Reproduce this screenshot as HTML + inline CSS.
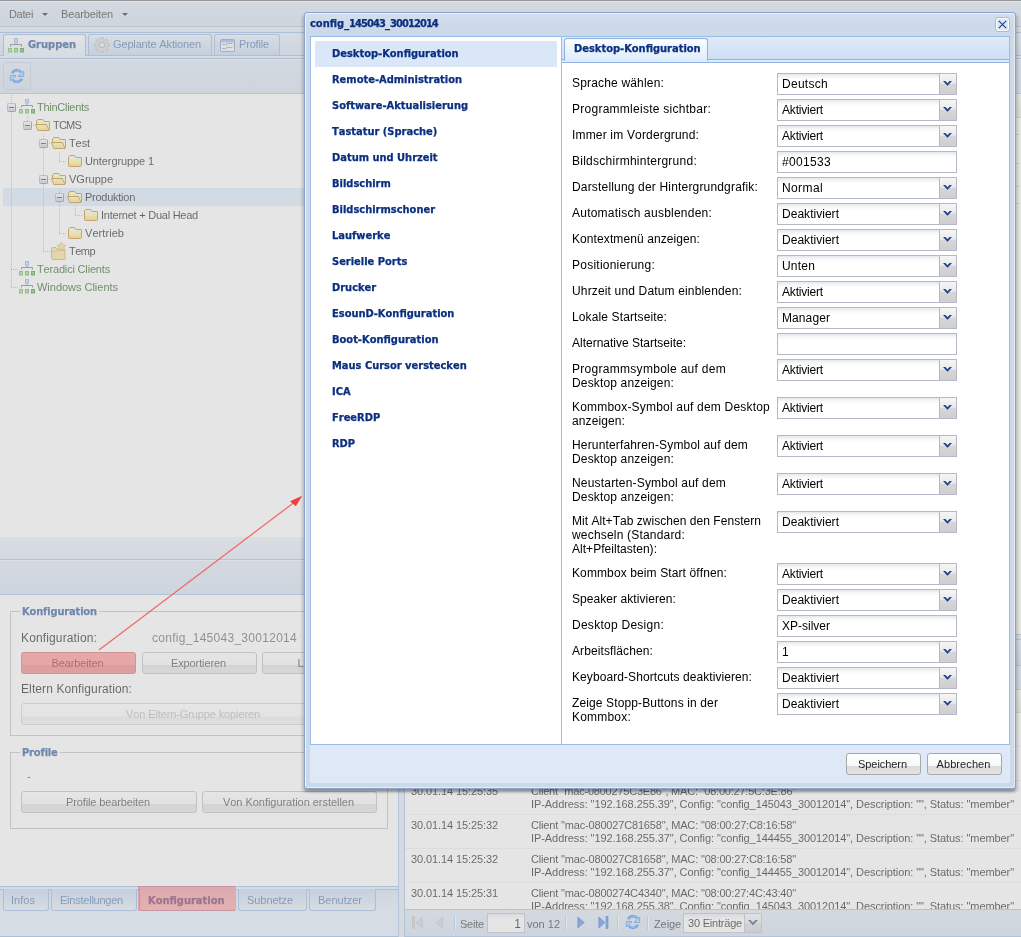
<!DOCTYPE html><html lang="de"><head><meta charset="utf-8"><title>TCMS</title><style>
*{box-sizing:border-box;margin:0;padding:0}
html,body{width:1021px;height:937px;overflow:hidden;background:#fff}
body{font:11px "Liberation Sans",sans-serif;color:#000;position:relative;font-kerning:none}
.abs{position:absolute}
.bd{font-family:"DejaVu Sans Condensed","DejaVu Sans",sans-serif;font-weight:bold;font-size:11px;-webkit-text-stroke:.25px currentColor}
#wrap{position:absolute;left:0;top:0;width:1021px;height:937px;overflow:hidden;will-change:transform}
#app{position:absolute;left:0;top:0;width:1021px;height:937px;background:#dfe8f6;overflow:hidden}
#mask{position:absolute;left:0;top:1px;width:1021px;height:936px;background:rgba(204,204,204,.5)}
#topline{position:absolute;left:0;top:0;width:1021px;height:1px;background:#979797}
.tb{position:absolute;background:linear-gradient(#dbe6f4,#d6e2f2 50%,#d2deef);border-bottom:1px solid #a9bfd3}
.menu{position:absolute;top:0;height:25px;line-height:25px;font-size:11px;color:#222;white-space:nowrap}
.arr{position:absolute;width:0;height:0;border-left:3px solid transparent;border-right:3px solid transparent;border-top:3px solid #111}
.strip{position:absolute;background:#deecfd;border:1px solid #8db2e3}
.tab{position:absolute;border:1px solid #8db2e3;border-bottom:none;border-radius:3px 3px 0 0;background:linear-gradient(#e6effb,#cfdff4 50%,#c1d5ee);color:#416aa3;font-size:11px;white-space:nowrap;box-shadow:inset 0 1px 0 #f2f7fd}
.tab.act{background:linear-gradient(#fff,#eef5fe 40%,#deecfd);color:#15428b}
.tab span.t{position:absolute;top:0;line-height:19px}
.btab{position:absolute;border:1px solid #8db2e3;border-top:none;border-radius:0 0 3px 3px;background:linear-gradient(#c1d5ee,#cfdff4 50%,#e6effb);color:#416aa3;font-size:11px;white-space:nowrap}
.btab span{position:absolute;top:0;line-height:23px}
.trow{position:absolute;left:3px;width:395px;height:18px;font-size:11px;white-space:nowrap}
.trow.sel{background:#d9e8fb}
.trow .tx{position:absolute;top:0;line-height:18px}
.green{color:#115000}
.vl{position:absolute;width:1px;background:repeating-linear-gradient(#b0b0b0 0 1px,transparent 1px 2px)}
.hl{position:absolute;height:1px;background:repeating-linear-gradient(90deg,#b0b0b0 0 1px,transparent 1px 2px)}
.pm{position:absolute;width:9px;height:9px;border:1px solid #8494b0;border-color:#a3b0c6 #6f80a0 #6f80a0 #a3b0c6;border-radius:2px;background:linear-gradient(#fdfdfe,#d4dce8 60%,#b9c5d8)}
.pm:after{content:"";position:absolute;left:1px;top:3px;width:5px;height:1px;background:#333}
.btn{position:absolute;height:22px;border:1px solid #b8b8b8;border-radius:3px;background:linear-gradient(#fff,#f7f7f7 60%,#dcdcdc 62%,#e2e2e2);color:#333;font-size:11px;line-height:20px;text-align:center;padding-right:2px;white-space:nowrap;overflow:hidden}
.btn.dis{color:#b0b0b0;border-color:#cfcfcf;background:linear-gradient(#fff,#fafafa 62%,#ececec 64%,#f0f0f0)}
.fs{position:absolute;border:1px solid #b5b8c8}
.legend{position:absolute;background:#fff;color:#15428b;padding:0 2px;white-space:nowrap;line-height:14px;letter-spacing:-.15px}
.lbl{position:absolute;white-space:nowrap;color:#000;line-height:14px}
.grow{position:absolute;left:405px;width:616px;height:34px;border-top:1px solid #fff;border-bottom:1px solid #ededed;font-size:11px;color:#000;white-space:nowrap;overflow:hidden}
.grow span.c{position:absolute;line-height:13px}
.sep{position:absolute;width:2px;height:14px;border-left:1px solid #98c8ff;border-right:1px solid #fff}
#win{position:absolute;left:304px;top:12px;width:712px;height:777px;background:#ccd9e8;border:1px solid #8aa4c9;border-radius:3px;box-shadow:inset 1px 1px 0 #f0f4fa,inset -1px -1px 0 #e6edf6,0 3px 2px 0 rgba(0,0,0,.13),-2px 3px 3px 0 rgba(0,0,0,.15),2px 3px 3px 0 rgba(0,0,0,.15)}
.wtitle{position:absolute;left:5px;top:4px;color:#0b2f80;white-space:nowrap;line-height:14px}
.li{position:absolute;width:242px;height:26px;padding-left:17px;color:#0b2f80;line-height:26px;white-space:nowrap}
.li.sel{background:#dae7f9}
.frow{position:absolute;left:10px;width:430px}
.flabel{position:absolute;left:0;width:205px;font-size:12px;line-height:14px;padding:3px 3px 3px 0;white-space:nowrap}
.fld{position:absolute;left:205px;width:180px;height:22px;border:1px solid #b5b8c8;background:linear-gradient(#e4e8ec,#f6f7f9 3px,#fff 6px);font-size:12px;line-height:20px;padding-left:4px;white-space:nowrap;overflow:hidden}
.trg{position:absolute;right:0;top:0;width:17px;height:20px;border-left:1px solid #b5b8c8;background:linear-gradient(#f6f6f6,#eaeaea 46%,#d6d6d6 50%,#cfcfcf)}
.trg svg{position:absolute;left:3px;top:7px}
</style></head><body>
<div id="wrap"><div id="app">
<div class="tb" style="left:0;top:1px;width:1021px;height:26px;border-top:1px solid #f6fafe">
<span class="menu" style="left:9px"><span style="letter-spacing:-0.336px">Datei</span></span><i class="arr" style="left:42px;top:11px"></i>
<span class="menu" style="left:61px"><span style="letter-spacing:-0.121px">Bearbeiten</span></span><i class="arr" style="left:122px;top:11px"></i>
</div>
<div class="strip" style="left:-1px;top:32px;width:400px;height:27px"></div>
<div class="abs" style="left:0;top:33px;width:398px;height:22px;background:linear-gradient(#e3edfb,#cedff5)"></div>
<div class="abs" style="left:0;top:55px;width:398px;height:1px;background:#8db2e3"></div>
<div class="tab act bd" style="left:3px;top:34px;width:83px;height:22px"><svg class="abs" style="left:4px;top:3px" width="16" height="15" viewBox="0 0 16 15"><rect x="6" y="0" width="4" height="4.500" fill="#74aef6"/><rect x="7" y="1" width="2" height="2.500" fill="#c8d6fa"/><path d="M8 4.500v2M2.500 8.500V6.500h11v2" stroke="#6c6c6c" fill="none"/><rect x="0" y="10" width="4" height="4.500" fill="#55b640"/><rect x="1" y="11" width="2" height="2.500" fill="#a4de90"/><rect x="6" y="10" width="4" height="4.500" fill="#4fb03a"/><rect x="7" y="11" width="2" height="2.500" fill="#98d884"/><rect x="12" y="10" width="4" height="4.500" fill="#2a8c1c"/><rect x="13" y="11" width="2" height="2.500" fill="#68be54"/></svg><span class="t" style="left:24px">Gruppen</span></div>
<div class="tab" style="left:88px;top:34px;width:124px;height:21px"><svg class="abs" style="left:5px;top:2px" width="16" height="16" viewBox="0 0 16 16"><g fill="#cfcfcf" stroke="#a8a8a8" stroke-width=".6"><rect x="6.500" y=".3" width="3" height="4" rx=".6" transform="rotate(0 8 8)"/><rect x="6.500" y=".3" width="3" height="4" rx=".6" transform="rotate(45 8 8)"/><rect x="6.500" y=".3" width="3" height="4" rx=".6" transform="rotate(90 8 8)"/><rect x="6.500" y=".3" width="3" height="4" rx=".6" transform="rotate(135 8 8)"/><rect x="6.500" y=".3" width="3" height="4" rx=".6" transform="rotate(180 8 8)"/><rect x="6.500" y=".3" width="3" height="4" rx=".6" transform="rotate(225 8 8)"/><rect x="6.500" y=".3" width="3" height="4" rx=".6" transform="rotate(270 8 8)"/><rect x="6.500" y=".3" width="3" height="4" rx=".6" transform="rotate(315 8 8)"/></g><circle cx="8" cy="8" r="5.200" fill="#d6d6d6"/><circle cx="8" cy="8" r="2.900" fill="none" stroke="#a4a4a4" stroke-width="1"/><circle cx="8" cy="8" r="2" fill="#e6edf7"/></svg><span class="t" style="left:24px"><span style="letter-spacing:-0.148px">Geplante Aktionen</span></span></div>
<div class="tab" style="left:214px;top:34px;width:66px;height:21px"><svg class="abs" style="left:5px;top:4px" width="15" height="13" viewBox="0 0 15 13"><rect x=".5" y=".5" width="14" height="12" rx="1" fill="#f4f4f2" stroke="#6c8fce"/><rect x="1" y="1" width="13" height="2.400" fill="#8db0e6"/><path d="M2.500 5.500h2.500M2.500 9.500h2.500" stroke="#5b7fd0" stroke-width="1.200"/><path d="M6.500 6.500V4.500h6M6.500 10.500V8.500h6" stroke="#a0a0a0" fill="none"/></svg><span class="t" style="left:24px"><span style="letter-spacing:-0.168px">Profile</span></span></div>
<div class="tb" style="left:0;top:59px;width:398px;height:35px;border-top:1px solid #eef3fa"></div>
<div class="abs" style="left:3px;top:62px;width:28px;height:28px;border:1px solid #bfcbdb;border-radius:3px;background:linear-gradient(#dde7f4,#d0dcee)"><svg class="abs" style="left:5px;top:5px" width="16" height="16" viewBox="0 0 16 16"><path d="M3.200 5.200A5.300 5.300 0 0 1 12.200 4.300" stroke="#1478ee" stroke-width="2.600" fill="none"/><path d="M3.600 4.900A5 5 0 0 1 11.800 4.300" stroke="#78beff" stroke-width=".9" fill="none"/><path d="M14.700 3.200V8.400H9z" fill="#a4dcff" stroke="#2a80e6" stroke-width=".9"/><path d="M12.800 10.800A5.300 5.300 0 0 1 3.800 11.700" stroke="#1478ee" stroke-width="2.600" fill="none"/><path d="M12.400 11.100A5 5 0 0 1 4.200 11.700" stroke="#78beff" stroke-width=".9" fill="none"/><path d="M1.300 12.800V7.600H7z" fill="#a4dcff" stroke="#2a80e6" stroke-width=".9"/></svg></div>
<div class="abs" style="left:0;top:94px;width:398px;height:443px;background:#fff"></div>
<div class="trow" style="top:98px">
<i class="hl" style="left:14px;top:9px;width:2px"></i><i class="pm" style="left:4px;top:5px"></i>
<svg class="abs" style="left:16px;top:1px" width="16" height="15" viewBox="0 0 16 15"><rect x="6" y="0" width="4" height="4.500" fill="#74aef6"/><rect x="7" y="1" width="2" height="2.500" fill="#c8d6fa"/><path d="M8 4.500v2M2.500 8.500V6.500h11v2" stroke="#6c6c6c" fill="none"/><rect x="0" y="10" width="4" height="4.500" fill="#55b640"/><rect x="1" y="11" width="2" height="2.500" fill="#a4de90"/><rect x="6" y="10" width="4" height="4.500" fill="#4fb03a"/><rect x="7" y="11" width="2" height="2.500" fill="#98d884"/><rect x="12" y="10" width="4" height="4.500" fill="#2a8c1c"/><rect x="13" y="11" width="2" height="2.500" fill="#68be54"/></svg>
<span class="tx green" style="left:34px"><span style="letter-spacing:-0.275px">ThinClients</span></span></div>
<div class="trow" style="top:116px">
<i class="hl" style="left:30px;top:9px;width:2px"></i><i class="pm" style="left:20px;top:5px"></i>
<svg class="abs" style="left:32px;top:2px" width="16" height="14" viewBox="0 0 16 14"><path d="M1.500 7V2.800L3 1.500h4.800L9.200 3.500H14q.5 0 .5.500V11.500L13.500 12.500" fill="#fffc9a" stroke="#b87c10"/><path d="M3 3h4.500" stroke="#fff" stroke-width="1"/><path d="M10 4.500h4" stroke="#fff" stroke-width="1"/><path d="M.5 6.500H11.300L14 12.500H2.800z" fill="#fff796" stroke="#b87c10"/><path d="M2 9.500H12.600L13.600 12H3z" fill="#ffc45a" opacity=".45"/></svg>
<span class="tx" style="left:50px"><span style="letter-spacing:-0.791px">TCMS</span></span></div>
<div class="trow" style="top:134px">
<i class="hl" style="left:46px;top:9px;width:2px"></i><i class="pm" style="left:36px;top:5px"></i>
<svg class="abs" style="left:48px;top:2px" width="16" height="14" viewBox="0 0 16 14"><path d="M1.500 7V2.800L3 1.500h4.800L9.200 3.500H14q.5 0 .5.500V11.500L13.500 12.500" fill="#fffc9a" stroke="#b87c10"/><path d="M3 3h4.500" stroke="#fff" stroke-width="1"/><path d="M10 4.500h4" stroke="#fff" stroke-width="1"/><path d="M.5 6.500H11.300L14 12.500H2.800z" fill="#fff796" stroke="#b87c10"/><path d="M2 9.500H12.600L13.600 12H3z" fill="#ffc45a" opacity=".45"/></svg>
<span class="tx" style="left:66px"><span style="letter-spacing:-0.098px">Test</span></span></div>
<div class="trow" style="top:152px">
<i class="hl" style="left:56px;top:9px;width:8px"></i>
<svg class="abs" style="left:64px;top:2px" width="16" height="14" viewBox="0 0 16 14"><path d="M1.500 11.500V2.800L2.800 1.500H7.800L9 3.500H14q.5 0 .5.500V11.500q0 1-1 1H2.500q-1 0-1-1z" fill="#fffa96" stroke="#b87c10"/><path d="M3 2.800h4.500M2.300 4.600H13.700" stroke="#fff" stroke-width="1"/><path d="M2 8H14V11.500q0 .5-.5.500H2.500q-.5 0-.5-.5z" fill="#ffc45a" opacity=".28"/><path d="M2 10H14V11.500q0 .5-.5.500H2.500q-.5 0-.5-.5z" fill="#ffb84a" opacity=".35"/></svg>
<span class="tx" style="left:82px"><span style="letter-spacing:-0.102px">Untergruppe 1</span></span></div>
<div class="trow" style="top:170px">
<i class="hl" style="left:46px;top:9px;width:2px"></i><i class="pm" style="left:36px;top:5px"></i>
<svg class="abs" style="left:48px;top:2px" width="16" height="14" viewBox="0 0 16 14"><path d="M1.500 7V2.800L3 1.500h4.800L9.200 3.500H14q.5 0 .5.500V11.500L13.500 12.500" fill="#fffc9a" stroke="#b87c10"/><path d="M3 3h4.500" stroke="#fff" stroke-width="1"/><path d="M10 4.500h4" stroke="#fff" stroke-width="1"/><path d="M.5 6.500H11.300L14 12.500H2.800z" fill="#fff796" stroke="#b87c10"/><path d="M2 9.500H12.600L13.600 12H3z" fill="#ffc45a" opacity=".45"/></svg>
<span class="tx" style="left:66px"><span style="letter-spacing:-0.004px">VGruppe</span></span></div>
<div class="trow sel" style="top:188px">
<i class="hl" style="left:62px;top:9px;width:2px"></i><i class="pm" style="left:52px;top:5px"></i>
<svg class="abs" style="left:64px;top:2px" width="16" height="14" viewBox="0 0 16 14"><path d="M1.500 7V2.800L3 1.500h4.800L9.200 3.500H14q.5 0 .5.500V11.500L13.500 12.500" fill="#fffc9a" stroke="#b87c10"/><path d="M3 3h4.500" stroke="#fff" stroke-width="1"/><path d="M10 4.500h4" stroke="#fff" stroke-width="1"/><path d="M.5 6.500H11.300L14 12.500H2.800z" fill="#fff796" stroke="#b87c10"/><path d="M2 9.500H12.600L13.600 12H3z" fill="#ffc45a" opacity=".45"/></svg>
<span class="tx" style="left:82px"><span style="letter-spacing:-0.259px">Produktion</span></span></div>
<div class="trow" style="top:206px">
<i class="hl" style="left:72px;top:9px;width:8px"></i>
<svg class="abs" style="left:80px;top:2px" width="16" height="14" viewBox="0 0 16 14"><path d="M1.500 11.500V2.800L2.800 1.500H7.800L9 3.500H14q.5 0 .5.500V11.500q0 1-1 1H2.500q-1 0-1-1z" fill="#fffa96" stroke="#b87c10"/><path d="M3 2.800h4.500M2.300 4.600H13.700" stroke="#fff" stroke-width="1"/><path d="M2 8H14V11.500q0 .5-.5.500H2.500q-.5 0-.5-.5z" fill="#ffc45a" opacity=".28"/><path d="M2 10H14V11.500q0 .5-.5.500H2.500q-.5 0-.5-.5z" fill="#ffb84a" opacity=".35"/></svg>
<span class="tx" style="left:98px"><span style="letter-spacing:-0.241px">Internet + Dual Head</span></span></div>
<div class="trow" style="top:224px">
<i class="hl" style="left:56px;top:9px;width:8px"></i>
<svg class="abs" style="left:64px;top:2px" width="16" height="14" viewBox="0 0 16 14"><path d="M1.500 11.500V2.800L2.800 1.500H7.800L9 3.500H14q.5 0 .5.500V11.500q0 1-1 1H2.500q-1 0-1-1z" fill="#fffa96" stroke="#b87c10"/><path d="M3 2.800h4.500M2.300 4.600H13.700" stroke="#fff" stroke-width="1"/><path d="M2 8H14V11.500q0 .5-.5.500H2.500q-.5 0-.5-.5z" fill="#ffc45a" opacity=".28"/><path d="M2 10H14V11.500q0 .5-.5.500H2.500q-.5 0-.5-.5z" fill="#ffb84a" opacity=".35"/></svg>
<span class="tx" style="left:82px"><span style="letter-spacing:0.060px">Vertrieb</span></span></div>
<div class="trow" style="top:242px">
<i class="hl" style="left:40px;top:9px;width:8px"></i>
<svg class="abs" style="left:48px;top:-1px" width="18" height="20" viewBox="0 0 18 20"><path d="M.5 17.500V7.500q0-1 1-1h3.500l1 1.500h7q1 0 1 1v8.500q0 1-1 1h-11.500q-1 0-1-1z" fill="#fbe08a" stroke="#d9a04a"/><path d="M1.200 10.500h4l1-1h7.300" fill="none" stroke="#e4b05c" stroke-width=".8"/><path d="M10.500 1l1.400 2.900 3.100.4-2.300 2.100.6 3.100-2.800-1.500-2.800 1.500.6-3.100L6 4.300l3.100-.4z" fill="#f9e39a" stroke="#d6a850" stroke-width=".8"/></svg>
<span class="tx" style="left:66px"><span style="letter-spacing:-0.529px">Temp</span></span></div>
<div class="trow" style="top:260px">
<i class="hl" style="left:8px;top:9px;width:8px"></i>
<svg class="abs" style="left:16px;top:1px" width="16" height="15" viewBox="0 0 16 15"><rect x="6" y="0" width="4" height="4.500" fill="#74aef6"/><rect x="7" y="1" width="2" height="2.500" fill="#c8d6fa"/><path d="M8 4.500v2M2.500 8.500V6.500h11v2" stroke="#6c6c6c" fill="none"/><rect x="0" y="10" width="4" height="4.500" fill="#55b640"/><rect x="1" y="11" width="2" height="2.500" fill="#a4de90"/><rect x="6" y="10" width="4" height="4.500" fill="#4fb03a"/><rect x="7" y="11" width="2" height="2.500" fill="#98d884"/><rect x="12" y="10" width="4" height="4.500" fill="#2a8c1c"/><rect x="13" y="11" width="2" height="2.500" fill="#68be54"/></svg>
<span class="tx green" style="left:34px"><span style="letter-spacing:-0.175px">Teradici Clients</span></span></div>
<div class="trow" style="top:278px">
<i class="hl" style="left:8px;top:9px;width:8px"></i>
<svg class="abs" style="left:16px;top:1px" width="16" height="15" viewBox="0 0 16 15"><rect x="6" y="0" width="4" height="4.500" fill="#74aef6"/><rect x="7" y="1" width="2" height="2.500" fill="#c8d6fa"/><path d="M8 4.500v2M2.500 8.500V6.500h11v2" stroke="#6c6c6c" fill="none"/><rect x="0" y="10" width="4" height="4.500" fill="#55b640"/><rect x="1" y="11" width="2" height="2.500" fill="#a4de90"/><rect x="6" y="10" width="4" height="4.500" fill="#4fb03a"/><rect x="7" y="11" width="2" height="2.500" fill="#98d884"/><rect x="12" y="10" width="4" height="4.500" fill="#2a8c1c"/><rect x="13" y="11" width="2" height="2.500" fill="#68be54"/></svg>
<span class="tx green" style="left:34px"><span style="letter-spacing:-0.020px">Windows Clients</span></span></div>
<i class="vl" style="left:11px;top:95px;height:8px"></i>
<i class="vl" style="left:11px;top:112px;height:175px"></i>
<i class="vl" style="left:27px;top:116px;height:5px"></i>
<i class="vl" style="left:43px;top:134px;height:5px"></i>
<i class="vl" style="left:43px;top:148px;height:27px"></i>
<i class="vl" style="left:43px;top:184px;height:67px"></i>
<i class="vl" style="left:59px;top:152px;height:9px"></i>
<i class="vl" style="left:59px;top:188px;height:5px"></i>
<i class="vl" style="left:59px;top:202px;height:31px"></i>
<i class="vl" style="left:75px;top:206px;height:9px"></i>
<div class="abs" style="left:0;top:537px;width:398px;height:23px;background:linear-gradient(#e9f0fa,#dbe6f5);border-bottom:1px solid #99bbe8"></div>
<div class="tb" style="left:0;top:560px;width:398px;height:35px;border-bottom:1px solid #99bbe8;border-top:1px solid #eef3fa"></div>
<div class="abs" style="left:0;top:595px;width:398px;height:291px;background:#fff"></div>
<div class="fs" style="left:10px;top:611px;width:378px;height:125px"></div>
<span class="legend bd" style="left:20px;top:605px">Konfiguration</span>
<span class="lbl" style="left:21px;top:631px;font-size:12px"><span style="letter-spacing:0.139px">Konfiguration:</span></span>
<span class="lbl" style="left:152px;top:631px;color:#555;font-size:12px"><span style="letter-spacing:0.282px">config_145043_30012014</span></span>
<div class="btn" style="left:21px;top:652px;width:115px"><span style="letter-spacing:-0.121px">Bearbeiten</span></div>
<div class="btn" style="left:142px;top:652px;width:115px"><span style="letter-spacing:-0.114px">Exportieren</span></div>
<div class="btn" style="left:262px;top:652px;width:115px"><span style="letter-spacing:0.059px">Löschen</span></div>
<span class="lbl" style="left:21px;top:682px;font-size:12px"><span style="letter-spacing:0.108px">Eltern Konfiguration:</span></span>
<div class="btn dis" style="left:21px;top:703px;width:346px"><span style="letter-spacing:-0.114px">Von Eltern-Gruppe kopieren</span></div>
<div class="fs" style="left:10px;top:752px;width:378px;height:77px"></div>
<span class="legend bd" style="left:20px;top:746px">Profile</span>
<span class="lbl" style="left:27px;top:769px;color:#333">-</span>
<div class="btn" style="left:21px;top:791px;width:176px"><span style="letter-spacing:-0.123px">Profile bearbeiten</span></div>
<div class="btn" style="left:202px;top:791px;width:175px"><span style="letter-spacing:-0.040px">Von Konfiguration erstellen</span></div>
<div class="abs" style="left:0;top:886px;width:398px;height:51px;background:#deecfd;border-top:1px solid #8db2e3;border-bottom:1px solid #8db2e3"></div>
<div class="abs" style="left:0;top:889px;width:398px;height:23px;background:linear-gradient(#cedff5,#e3edfb);border-top:1px solid #8db2e3"></div>
<div class="btab" style="left:3px;top:889px;width:46px;height:22px"><span style="left:7px"><span style="letter-spacing:0.030px">Infos</span></span></div>
<div class="btab" style="left:51px;top:889px;width:86px;height:22px"><span style="left:8px"><span style="letter-spacing:-0.234px">Einstellungen</span></span></div>
<div class="btab bd" style="left:139px;top:887px;width:97px;height:24px;color:#15428b;background:linear-gradient(#deecfd,#eef5fe 60%,#fff)"><span style="left:8px;top:2px;line-height:24px">Konfiguration</span></div>
<div class="btab" style="left:238px;top:889px;width:69px;height:22px"><span style="left:8px"><span style="letter-spacing:-0.060px">Subnetze</span></span></div>
<div class="btab" style="left:309px;top:889px;width:67px;height:22px"><span style="left:8px"><span style="letter-spacing:-0.003px">Benutzer</span></span></div>
<div class="abs" style="left:398px;top:32px;width:1px;height:905px;background:#99bbe8"></div>
<div class="abs" style="left:404px;top:32px;width:617px;height:905px;background:#fff;border-left:1px solid #99bbe8"></div>
<div class="strip" style="left:404px;top:32px;width:620px;height:27px"></div>
<div class="abs" style="left:405px;top:33px;width:616px;height:23px;background:linear-gradient(#e3edfb,#cedff5);border-bottom:1px solid #8db2e3"></div>
<div class="tb" style="left:405px;top:59px;width:616px;height:35px;border-top:1px solid #eef3fa"></div>
<div class="abs" style="left:405px;top:94px;width:616px;height:24px;background:linear-gradient(#f9f9f9,#e8e8e8);border-bottom:1px solid #d0d0d0"></div>
<i class="hl" style="left:1016px;top:134px;width:4px"></i>
<i class="hl" style="left:1016px;top:163px;width:4px"></i>
<i class="hl" style="left:1016px;top:186px;width:4px"></i>
<i class="hl" style="left:1016px;top:203px;width:4px"></i>
<div class="abs" style="left:405px;top:634px;width:616px;height:6px;background:#dfe8f6;border-top:1px solid #99bbe8"></div>
<div class="abs" style="left:405px;top:639px;width:616px;height:27px;background:linear-gradient(#dae7f8,#c3d7f0);border-top:1px solid #99bbe8;border-bottom:1px solid #99bbe8"></div>
<div class="tb" style="left:405px;top:666px;width:616px;height:24px"></div>
<div class="abs" style="left:405px;top:690px;width:616px;height:23px;background:linear-gradient(#f9f9f9,#e8e8e8);border-bottom:1px solid #d0d0d0"></div>
<div class="abs" style="left:405px;top:746px;width:616px;height:1px;background:#ededed"></div>
<div class="abs" style="left:405px;top:780px;width:616px;height:1px;background:#ededed"></div>
<div class="grow" style="top:781px;height:34px"><span class="c" style="left:6px;top:3px"><span style="letter-spacing:-0.100px">30.01.14 15:25:35</span></span><span class="c" style="left:126px;top:3px"><span style="letter-spacing:-0.218px">Client "mac-0800275C3E86", MAC: "08:00:27:5C:3E:86"</span></span><span class="c" style="left:126px;top:16px"><span style="letter-spacing:-0.077px">IP-Address: "192.168.255.39", Config: "config_145043_30012014", Description: "", Status: "member"</span></span></div>
<div class="grow" style="top:815px;height:34px"><span class="c" style="left:6px;top:3px"><span style="letter-spacing:-0.100px">30.01.14 15:25:32</span></span><span class="c" style="left:126px;top:3px"><span style="letter-spacing:-0.170px">Client "mac-080027C81658", MAC: "08:00:27:C8:16:58"</span></span><span class="c" style="left:126px;top:16px"><span style="letter-spacing:-0.077px">IP-Address: "192.168.255.37", Config: "config_144455_30012014", Description: "", Status: "member"</span></span></div>
<div class="grow" style="top:849px;height:34px"><span class="c" style="left:6px;top:3px"><span style="letter-spacing:-0.100px">30.01.14 15:25:32</span></span><span class="c" style="left:126px;top:3px"><span style="letter-spacing:-0.170px">Client "mac-080027C81658", MAC: "08:00:27:C8:16:58"</span></span><span class="c" style="left:126px;top:16px"><span style="letter-spacing:-0.077px">IP-Address: "192.168.255.37", Config: "config_144455_30012014", Description: "", Status: "member"</span></span></div>
<div class="grow" style="top:883px;height:26px;border-bottom:none"><span class="c" style="left:6px;top:3px"><span style="letter-spacing:-0.100px">30.01.14 15:25:31</span></span><span class="c" style="left:126px;top:3px"><span style="letter-spacing:-0.170px">Client "mac-0800274C4340", MAC: "08:00:27:4C:43:40"</span></span><span class="c" style="left:126px;top:16px"><span style="letter-spacing:-0.077px">IP-Address: "192.168.255.38", Config: "config_145043_30012014", Description: "", Status: "member"</span></span></div>
<div class="tb" style="left:405px;top:909px;width:616px;height:28px;border-top:1px solid #99bbe8;border-bottom:1px solid #99bbe8"></div>
<svg class="abs" style="left:412px;top:916px" width="12" height="13" viewBox="0 0 12 13"><rect x=".5" y=".5" width="2" height="12" fill="#c8c8c8" stroke="#b0b0b0" stroke-width=".6"/><path d="M10.500 1v11L4 6.500z" fill="#cfcfcf" stroke="#b4b4b4" stroke-width=".6"/></svg>
<svg class="abs" style="left:435px;top:916px" width="8" height="13" viewBox="0 0 8 13"><path d="M7.500 1v11L1 6.500z" fill="#cfcfcf" stroke="#b4b4b4" stroke-width=".6"/></svg>
<i class="sep" style="left:454px;top:916px"></i>
<span class="lbl" style="left:460px;top:917px;color:#222"><span style="letter-spacing:-0.214px">Seite</span></span>
<div class="abs" style="left:487px;top:913px;width:38px;height:20px;border:1px solid #b5b8c8;background:linear-gradient(#e4e8ec,#fff 5px);font-size:12px;line-height:20px;text-align:right;padding-right:3px">1</div>
<span class="lbl" style="left:527px;top:917px;color:#222"><span style="letter-spacing:-0.004px">von 12</span></span>
<i class="sep" style="left:565px;top:916px"></i>
<svg class="abs" style="left:577px;top:916px" width="8" height="13" viewBox="0 0 8 13"><path d="M.8 1v11L7.300 6.500z" fill="#3f7fec" stroke="#1c54c4" stroke-width=".6"/></svg>
<svg class="abs" style="left:598px;top:916px" width="11" height="13" viewBox="0 0 11 13"><path d="M.8 1v11L7 6.500z" fill="#3f7fec" stroke="#1c54c4" stroke-width=".6"/><rect x="8" y=".5" width="2" height="12" fill="#3f7fec" stroke="#1c54c4" stroke-width=".6"/></svg>
<i class="sep" style="left:617px;top:916px"></i>
<svg class="abs" style="left:625px;top:914px" width="16" height="16" viewBox="0 0 16 16"><path d="M3.200 5.200A5.300 5.300 0 0 1 12.200 4.300" stroke="#1478ee" stroke-width="2.600" fill="none"/><path d="M3.600 4.900A5 5 0 0 1 11.800 4.300" stroke="#78beff" stroke-width=".9" fill="none"/><path d="M14.700 3.200V8.400H9z" fill="#a4dcff" stroke="#2a80e6" stroke-width=".9"/><path d="M12.800 10.800A5.300 5.300 0 0 1 3.800 11.700" stroke="#1478ee" stroke-width="2.600" fill="none"/><path d="M12.400 11.100A5 5 0 0 1 4.200 11.700" stroke="#78beff" stroke-width=".9" fill="none"/><path d="M1.300 12.800V7.600H7z" fill="#a4dcff" stroke="#2a80e6" stroke-width=".9"/></svg>
<i class="sep" style="left:647px;top:916px"></i>
<span class="lbl" style="left:654px;top:917px;color:#222"><span style="letter-spacing:-0.103px">Zeige</span></span>
<div class="abs" style="left:683px;top:913px;width:79px;height:20px;border:1px solid #b5b8c8;background:linear-gradient(#e4e8ec,#fff 5px);font-size:11px;line-height:18px;padding-left:4px;white-space:nowrap"><span style="letter-spacing:-0.206px">30 Einträge</span><i class="trg" style="height:18px"><svg style="top:6px" width="10" height="6" viewBox="0 0 10 6"><path d="M0 0h2.600L5 2.400 7.400 0H10L5 5.200z" fill="#1c3a8a"/></svg></i></div>
</div>
<div id="mask"></div><div id="topline"></div>
<div id="win">
<div class="abs" style="left:1px;top:1px;width:708px;height:22px;border-radius:2px 2px 0 0;background:linear-gradient(#d4dfed,#cedae9 40%,#ccd9e8)"></div>
<span class="wtitle bd">config_<span style="letter-spacing:-.9px">145043</span>_<span style="letter-spacing:-.9px">30012014</span></span>
<div class="abs" style="left:690px;top:4px;width:15px;height:15px;border:1px solid #9ebbe3;border-radius:3px;background:#dbe8fa;box-shadow:inset 0 0 0 1px #fff"><svg class="abs" style="left:2px;top:2px" width="9" height="9" viewBox="0 0 9 9"><path d="M.8 .8l7.400 7.400M8.200 .8l-7.400 7.400" stroke="#24408c" stroke-width="1.150" fill="none"/></svg></div>
<div class="abs" style="left:5px;top:23px;width:700px;height:709px;border:1px solid #99bbe8;background:#fff"></div>
<div class="abs" style="left:5px;top:732px;width:700px;height:38px;background:#dfe8f6"></div>
<div class="li bd sel" style="left:10px;top:28px">Desktop-Konfiguration</div>
<div class="li bd" style="left:10px;top:54px">Remote-Administration</div>
<div class="li bd" style="left:10px;top:80px">Software-Aktualisierung</div>
<div class="li bd" style="left:10px;top:106px">Tastatur (Sprache)</div>
<div class="li bd" style="left:10px;top:132px">Datum und Uhrzeit</div>
<div class="li bd" style="left:10px;top:158px">Bildschirm</div>
<div class="li bd" style="left:10px;top:184px">Bildschirmschoner</div>
<div class="li bd" style="left:10px;top:210px">Laufwerke</div>
<div class="li bd" style="left:10px;top:236px">Serielle Ports</div>
<div class="li bd" style="left:10px;top:262px">Drucker</div>
<div class="li bd" style="left:10px;top:288px">EsounD-Konfiguration</div>
<div class="li bd" style="left:10px;top:314px">Boot-Konfiguration</div>
<div class="li bd" style="left:10px;top:340px">Maus Cursor verstecken</div>
<div class="li bd" style="left:10px;top:366px">ICA</div>
<div class="li bd" style="left:10px;top:392px">FreeRDP</div>
<div class="li bd" style="left:10px;top:418px">RDP</div>
<div class="abs" style="left:256px;top:24px;width:1px;height:707px;background:#99bbe8"></div>
<div class="abs" style="left:257px;top:24px;width:447px;height:26px;background:#deecfd;border-bottom:1px solid #8db2e3"></div>
<div class="abs" style="left:257px;top:24px;width:447px;height:23px;background:linear-gradient(#e1ebf9,#cedff5);border-bottom:1px solid #8db2e3"></div>
<div class="tab act bd" style="left:259px;top:25px;width:144px;height:23px;color:#0b2f80"><span class="t" style="left:9px;line-height:20px">Desktop-Konfiguration</span></div>
<div class="abs" style="left:257px;top:50px;width:447px;height:681px">
<div class="frow" style="top:10px"><div class="flabel"><span style="letter-spacing:0.174px">Sprache wählen:</span></div><div class="fld"><span style="letter-spacing:0.283px">Deutsch</span><i class="trg"><svg width="9" height="5.400" viewBox="0 0 10 6"><path d="M0 0h2.600L5 2.400 7.400 0H10L5 5.200z" fill="#1c3a8a"/></svg></i></div></div>
<div class="frow" style="top:36px"><div class="flabel"><span style="letter-spacing:0.262px">Programmleiste sichtbar:</span></div><div class="fld"><span style="letter-spacing:-0.186px">Aktiviert</span><i class="trg"><svg width="9" height="5.400" viewBox="0 0 10 6"><path d="M0 0h2.600L5 2.400 7.400 0H10L5 5.200z" fill="#1c3a8a"/></svg></i></div></div>
<div class="frow" style="top:62px"><div class="flabel"><span style="letter-spacing:0.173px">Immer im Vordergrund:</span></div><div class="fld"><span style="letter-spacing:-0.186px">Aktiviert</span><i class="trg"><svg width="9" height="5.400" viewBox="0 0 10 6"><path d="M0 0h2.600L5 2.400 7.400 0H10L5 5.200z" fill="#1c3a8a"/></svg></i></div></div>
<div class="frow" style="top:88px"><div class="flabel"><span style="letter-spacing:0.255px">Bildschirmhintergrund:</span></div><div class="fld"><span style="letter-spacing:0.326px">#001533</span></div></div>
<div class="frow" style="top:114px"><div class="flabel"><span style="letter-spacing:0.174px">Darstellung der Hintergrundgrafik:</span></div><div class="fld"><span style="letter-spacing:0.388px">Normal</span><i class="trg"><svg width="9" height="5.400" viewBox="0 0 10 6"><path d="M0 0h2.600L5 2.400 7.400 0H10L5 5.200z" fill="#1c3a8a"/></svg></i></div></div>
<div class="frow" style="top:140px"><div class="flabel"><span style="letter-spacing:0.228px">Automatisch ausblenden:</span></div><div class="fld"><span style="letter-spacing:0.029px">Deaktiviert</span><i class="trg"><svg width="9" height="5.400" viewBox="0 0 10 6"><path d="M0 0h2.600L5 2.400 7.400 0H10L5 5.200z" fill="#1c3a8a"/></svg></i></div></div>
<div class="frow" style="top:166px"><div class="flabel"><span style="letter-spacing:0.091px">Kontextmenü anzeigen:</span></div><div class="fld"><span style="letter-spacing:0.029px">Deaktiviert</span><i class="trg"><svg width="9" height="5.400" viewBox="0 0 10 6"><path d="M0 0h2.600L5 2.400 7.400 0H10L5 5.200z" fill="#1c3a8a"/></svg></i></div></div>
<div class="frow" style="top:192px"><div class="flabel"><span style="letter-spacing:0.241px">Positionierung:</span></div><div class="fld"><span style="letter-spacing:0.196px">Unten</span><i class="trg"><svg width="9" height="5.400" viewBox="0 0 10 6"><path d="M0 0h2.600L5 2.400 7.400 0H10L5 5.200z" fill="#1c3a8a"/></svg></i></div></div>
<div class="frow" style="top:218px"><div class="flabel"><span style="letter-spacing:0.157px">Uhrzeit und Datum einblenden:</span></div><div class="fld"><span style="letter-spacing:-0.186px">Aktiviert</span><i class="trg"><svg width="9" height="5.400" viewBox="0 0 10 6"><path d="M0 0h2.600L5 2.400 7.400 0H10L5 5.200z" fill="#1c3a8a"/></svg></i></div></div>
<div class="frow" style="top:244px"><div class="flabel"><span style="letter-spacing:0.127px">Lokale Startseite:</span></div><div class="fld"><span style="letter-spacing:0.091px">Manager</span><i class="trg"><svg width="9" height="5.400" viewBox="0 0 10 6"><path d="M0 0h2.600L5 2.400 7.400 0H10L5 5.200z" fill="#1c3a8a"/></svg></i></div></div>
<div class="frow" style="top:270px"><div class="flabel"><span style="letter-spacing:-0.002px">Alternative Startseite:</span></div><div class="fld"></div></div>
<div class="frow" style="top:296px"><div class="flabel"><span style="letter-spacing:0.288px">Programmsymbole auf dem</span><br><span style="letter-spacing:0.153px">Desktop anzeigen:</span></div><div class="fld"><span style="letter-spacing:-0.186px">Aktiviert</span><i class="trg"><svg width="9" height="5.400" viewBox="0 0 10 6"><path d="M0 0h2.600L5 2.400 7.400 0H10L5 5.200z" fill="#1c3a8a"/></svg></i></div></div>
<div class="frow" style="top:334px"><div class="flabel"><span style="letter-spacing:0.197px">Kommbox-Symbol auf dem Desktop</span><br><span style="letter-spacing:0.106px">anzeigen:</span></div><div class="fld"><span style="letter-spacing:-0.186px">Aktiviert</span><i class="trg"><svg width="9" height="5.400" viewBox="0 0 10 6"><path d="M0 0h2.600L5 2.400 7.400 0H10L5 5.200z" fill="#1c3a8a"/></svg></i></div></div>
<div class="frow" style="top:372px"><div class="flabel"><span style="letter-spacing:0.158px">Herunterfahren-Symbol auf dem</span><br><span style="letter-spacing:0.153px">Desktop anzeigen:</span></div><div class="fld"><span style="letter-spacing:-0.186px">Aktiviert</span><i class="trg"><svg width="9" height="5.400" viewBox="0 0 10 6"><path d="M0 0h2.600L5 2.400 7.400 0H10L5 5.200z" fill="#1c3a8a"/></svg></i></div></div>
<div class="frow" style="top:410px"><div class="flabel"><span style="letter-spacing:0.184px">Neustarten-Symbol auf dem</span><br><span style="letter-spacing:0.153px">Desktop anzeigen:</span></div><div class="fld"><span style="letter-spacing:-0.186px">Aktiviert</span><i class="trg"><svg width="9" height="5.400" viewBox="0 0 10 6"><path d="M0 0h2.600L5 2.400 7.400 0H10L5 5.200z" fill="#1c3a8a"/></svg></i></div></div>
<div class="frow" style="top:448px"><div class="flabel"><span style="letter-spacing:0.038px">Mit Alt+Tab zwischen den Fenstern</span><br><span style="letter-spacing:0.190px">wechseln (Standard:</span><br><span style="letter-spacing:0.037px">Alt+Pfeiltasten):</span></div><div class="fld"><span style="letter-spacing:0.029px">Deaktiviert</span><i class="trg"><svg width="9" height="5.400" viewBox="0 0 10 6"><path d="M0 0h2.600L5 2.400 7.400 0H10L5 5.200z" fill="#1c3a8a"/></svg></i></div></div>
<div class="frow" style="top:500px"><div class="flabel"><span style="letter-spacing:0.113px">Kommbox beim Start öffnen:</span></div><div class="fld"><span style="letter-spacing:-0.186px">Aktiviert</span><i class="trg"><svg width="9" height="5.400" viewBox="0 0 10 6"><path d="M0 0h2.600L5 2.400 7.400 0H10L5 5.200z" fill="#1c3a8a"/></svg></i></div></div>
<div class="frow" style="top:526px"><div class="flabel"><span style="letter-spacing:0.067px">Speaker aktivieren:</span></div><div class="fld"><span style="letter-spacing:0.029px">Deaktiviert</span><i class="trg"><svg width="9" height="5.400" viewBox="0 0 10 6"><path d="M0 0h2.600L5 2.400 7.400 0H10L5 5.200z" fill="#1c3a8a"/></svg></i></div></div>
<div class="frow" style="top:552px"><div class="flabel"><span style="letter-spacing:0.264px">Desktop Design:</span></div><div class="fld"><span style="letter-spacing:-0.001px">XP-silver</span></div></div>
<div class="frow" style="top:578px"><div class="flabel"><span style="letter-spacing:0.108px">Arbeitsflächen:</span></div><div class="fld"><span style="letter-spacing:0.326px">1</span><i class="trg"><svg width="9" height="5.400" viewBox="0 0 10 6"><path d="M0 0h2.600L5 2.400 7.400 0H10L5 5.200z" fill="#1c3a8a"/></svg></i></div></div>
<div class="frow" style="top:604px"><div class="flabel"><span style="letter-spacing:0.080px">Keyboard-Shortcuts deaktivieren:</span></div><div class="fld"><span style="letter-spacing:0.029px">Deaktiviert</span><i class="trg"><svg width="9" height="5.400" viewBox="0 0 10 6"><path d="M0 0h2.600L5 2.400 7.400 0H10L5 5.200z" fill="#1c3a8a"/></svg></i></div></div>
<div class="frow" style="top:630px"><div class="flabel"><span style="letter-spacing:0.125px">Zeige Stopp-Buttons in der</span><br><span style="letter-spacing:0.206px">Kommbox:</span></div><div class="fld"><span style="letter-spacing:0.029px">Deaktiviert</span><i class="trg"><svg width="9" height="5.400" viewBox="0 0 10 6"><path d="M0 0h2.600L5 2.400 7.400 0H10L5 5.200z" fill="#1c3a8a"/></svg></i></div></div>
</div>
<div class="btn" style="left:541px;top:740px;width:75px;color:#222;border-color:#a8a8a8"><span style="letter-spacing:-0.059px">Speichern</span></div>
<div class="btn" style="left:622px;top:740px;width:75px;color:#222;border-color:#a8a8a8"><span style="letter-spacing:0.088px">Abbrechen</span></div>
</div>
<div class="abs" style="left:21px;top:652px;width:115px;height:22px;background:rgba(232,84,84,.42);border-radius:3px"></div>
<div class="abs" style="left:138px;top:886px;width:97px;height:25px;background:rgba(232,84,84,.36)"></div>
<svg class="abs" style="left:0;top:0" width="1021" height="937"><path d="M99 650L294 502.500" stroke="#f06668" stroke-width="1.200" fill="none"/><path d="M302.300 495.800L290 501.300 295.800 506.200z" fill="#f23e42"/></svg>
</div></body></html>
